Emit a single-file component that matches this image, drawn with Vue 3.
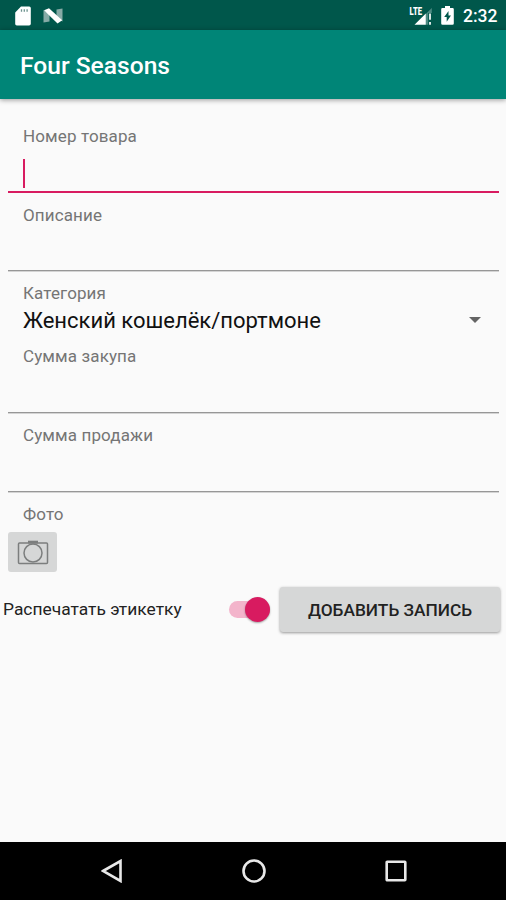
<script setup>
import { ref } from 'vue'

const category = ref('Женский кошелёк/портмоне')
const printLabel = ref(true)
</script>

<template>
  <div class="screen">
    <header class="status">
      <svg class="sd" width="16" height="20" viewBox="0 0 16 20">
        <path d="M6 .5h8.200q1.600 0 1.600 1.600v15.700q0 1.700-1.700 1.700H1.800Q.2 19.500.2 17.800V6.500z" fill="#fff" />
        <path d="M6.500 3.200v2.600M9.300 3.200v2.600M12.100 3.200v2.600" stroke="#6c938e" stroke-width="1.300" />
      </svg>
      <svg class="nougat" width="20" height="16" viewBox="0 0 20 16">
        <path d="M.5 2l6 4v7.500l-6 1zM13.500 1.500l6-1v13l-6-3z" fill="#86aaa6" />
        <path d="M1 2.200L6 .3l13.200 12-4.700 3.200z" fill="#fff" />
      </svg>
      <span class="grow"></span>
      <svg class="signal" width="24" height="20" viewBox="0 0 24 20">
        <path d="M22.800 2L17 7.800v11h2.200V7h3.600z" fill="#4d8a82" />
        <path d="M21 7.500v6.300M21 16v2.800" stroke="#d8e6e4" stroke-width="2" />
        <path d="M16.800 7.500v11.300H5.500z" fill="#fff" />
        <text class="lte" x="0.500" y="8.800" textLength="12.500" lengthAdjust="spacingAndGlyphs">LTE</text>
      </svg>
      <svg class="battery" width="13" height="19" viewBox="0 0 13 19">
        <path d="M4 0h5v2h2.600q1.200 0 1.200 1.200v14.300q0 1.300-1.300 1.300H1.500Q.2 18.800.2 17.500V3.200Q.2 2 1.400 2H4z" fill="#fff" />
        <path d="M7.500 5L3.200 11h2.500v4.800L10 9.500H7.500z" fill="#00574b" />
      </svg>
      <span class="clock">2:32</span>
    </header>

    <div class="appbar"><h1>Four Seasons</h1></div>

    <main>
      <div class="field focused">
        <div class="label">Номер товара</div>
        <div class="entry"><span class="caret"></span></div>
      </div>
      <div class="field">
        <div class="label">Описание</div>
      </div>
      <div class="spinner">
        <div class="label">Категория</div>
        <div class="value">
          <span>{{ category }}</span>
          <svg width="12" height="6" viewBox="0 0 12 6"><path d="M0 0h12L6 6z" fill="#646464" /></svg>
        </div>
      </div>
      <div class="field">
        <div class="label">Сумма закупа</div>
      </div>
      <div class="field">
        <div class="label">Сумма продажи</div>
      </div>
      <div class="photo">
        <div class="label">Фото</div>
        <button class="camera" aria-label="Фото">
          <svg width="32" height="26" viewBox="0 0 32 26" fill="none" stroke="#7c7e7e" stroke-width="1.500">
            <rect x="1.500" y="4" width="29" height="20.500" rx="1" />
            <circle cx="16" cy="14" r="9" />
            <path d="M11 3h10" stroke-width="2.600" />
          </svg>
        </button>
      </div>
      <div class="actions">
        <span class="print">Распечатать этикетку</span>
        <span class="switch" :class="{ on: printLabel }" @click="printLabel = !printLabel"><i></i></span>
        <button class="add"><span>ДОБАВИТЬ ЗАПИСЬ</span></button>
      </div>
    </main>

    <nav>
      <svg width="22" height="24" viewBox="0 0 22 24"><path d="M2 12L19.500 2v20z" /></svg>
      <svg width="24" height="24" viewBox="0 0 24 24"><circle cx="12" cy="12" r="10.500" /></svg>
      <svg width="22" height="22" viewBox="0 0 22 22"><rect x="1.700" y="1.700" width="18.600" height="18.600" rx=".5" /></svg>
    </nav>
  </div>
</template>

<style>
body { margin: 0; }
</style>

<style scoped>
.screen {
  width: 506px;
  height: 900px;
  display: flex;
  flex-direction: column;
  overflow: hidden;
  background: #fafafa;
  font-family: Roboto, sans-serif;
}
.status {
  height: 30px;
  flex: none;
  box-sizing: border-box;
  display: flex;
  align-items: center;
  padding: 1px 9px 0 15px;
  background: #00574b;
}
.nougat { margin-left: 12px; }
.grow { flex: 1; }
.lte {
  font: 900 10px Roboto, sans-serif;
  fill: #fff;
  stroke: #00574b;
  stroke-width: 1.500px;
  paint-order: stroke;
}
.battery { margin-left: 8px; }
.clock {
  width: 34px;
  margin-left: 9px;
  white-space: nowrap;
  color: #fff;
  font-size: 17.500px;
  font-weight: 500;
  line-height: 28px;
}
.appbar {
  height: 69px;
  flex: none;
  display: flex;
  align-items: center;
  padding: 0 20px;
  background: #008577;
  box-shadow: 0 1px 5px rgba(0, 0, 0, .4);
}
h1 {
  margin: 3px 0 0;
  color: #fff;
  font-size: 24.600px;
  font-weight: 500;
  line-height: 30px;
}
main { flex: 1; display: flex; flex-direction: column; }
.label {
  padding-left: 15px;
  color: #757575;
  font-size: 17px;
  letter-spacing: .12px;
  line-height: 20px;
}
.field {
  height: 79px;
  box-sizing: border-box;
  margin: 0 7px 0 8px;
  padding-top: 12px;
  border-bottom: 1px solid #979797;
  box-shadow: 0 1px #d4d4d4;
}
.field.focused {
  height: 94px;
  padding-top: 27px;
  border-bottom: 2px solid #d81b60;
  box-shadow: none;
}
.focused + .field { height: 78px; }
.entry { padding: 13px 0 0 15px; }
.caret { display: block; width: 2px; height: 29px; background: #d81b60; }
.spinner { height: 63px; padding: 12px 25px 0 8px; box-sizing: border-box; }
.value {
  display: flex;
  align-items: center;
  justify-content: space-between;
  padding: 4px 0 0 15px;
  color: #111;
  font-size: 22px;
  line-height: 27px;
  white-space: nowrap;
}
.value svg { position: relative; top: -1px; }
.photo { height: 94px; box-sizing: border-box; padding: 12px 0 0 8px; }
button { border: 0; padding: 0; font-family: inherit; background: #d6d7d7; border-radius: 3px; }
.camera {
  width: 49px;
  height: 40px;
  margin-top: 8px;
  display: flex;
  align-items: center;
  justify-content: center;
}
.actions { display: flex; align-items: center; height: 46px; padding: 0 6px 0 3px; }
.print { width: 226px; color: #222; font-size: 17.400px; line-height: 24px; white-space: nowrap; }
.switch {
  width: 41px;
  height: 17px;
  flex: none;
  border-radius: 9px;
  background: #c4c4c4;
  display: flex;
  align-items: center;
}
.switch i {
  width: 25px;
  height: 25px;
  flex: none;
  border-radius: 50%;
  background: #fafafa;
  box-shadow: 0 1px 2px rgba(0, 0, 0, .35);
}
.switch.on { justify-content: flex-end; background: #f3b4cb; }
.switch.on i { background: #d81b60; }
.add {
  width: 220px;
  height: 45px;
  margin: 1px 0 0 10px;
  flex: none;
  box-shadow: 0 1px 3px rgba(0, 0, 0, .4);
  color: #222;
  font-size: 17.300px;
  font-weight: 500;
}
nav {
  height: 58px;
  flex: none;
  box-sizing: border-box;
  display: flex;
  align-items: center;
  justify-content: space-between;
  padding: 0 99px 0 101px;
  background: #000;
}
nav svg { fill: none; stroke: #e8e8e8; stroke-width: 2.600; }
</style>
